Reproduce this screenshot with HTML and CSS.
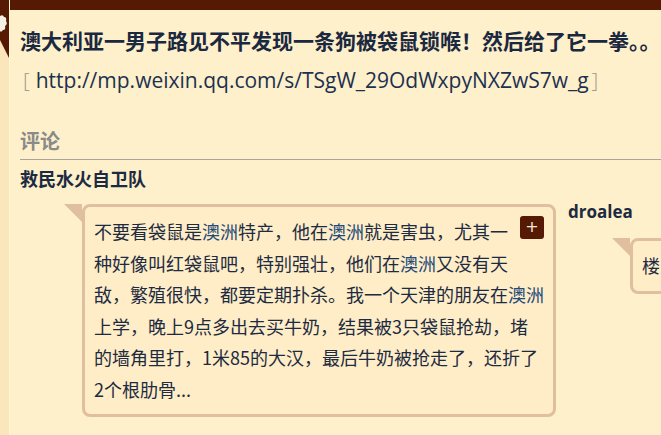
FILE: index.html
```html
<!DOCTYPE html>
<html lang="zh">
<head>
<meta charset="utf-8">
<title>澳大利亚一男子路见不平</title>
<link rel="stylesheet" href="styles.css">
</head>
<body>
<div class="page">
  <aside class="strip">
    <svg class="strip-logo" width="9" height="60" viewBox="0 0 9 60">
      <polygon points="0,0 9,0 9,58 0,40" fill="#561904"/>
      <path d="M0 16 Q3 14 4 17 Q7 17 6 21 Q8 24 5 26 Q6 30 3 30 Q1 33 0 31 Z" fill="#f6efe4"/>
    </svg>
  </aside>
  <main class="main">
    <div class="topbar"></div>
    <div class="content">
      <h1 class="title">澳大利亚一男子路见不平发现一条狗被袋鼠锁喉！然后给了它一拳。。</h1>
      <p class="link"><span class="br br-open">[</span>http://mp.weixin.qq.com/s/TSgW_29OdWxpyNXZwS7w_g<span class="br br-close">]</span></p>
      <h2 class="section">评论</h2>
      <div class="comments">
        <div class="comment">
          <div class="user">救民水火自卫队</div>
          <div class="bubble">
            <div class="card card-wide">
              <span class="plus">+</span>不要看袋鼠是<span class="hl">澳洲</span>特产，他在<span class="hl">澳洲</span>就是害虫，尤其一种好像叫红袋鼠吧，特别强壮，他们在<span class="hl">澳洲</span>又没有天敌，繁殖很快，都要定期扑杀。我一个天津的朋友在<span class="hl">澳洲</span>上学，晚上9点多出去买牛奶，结果被3只袋鼠抢劫，堵的墙角里打，1米85的大汉，最后牛奶被抢走了，还折了2个根肋骨...
            </div>
          </div>
        </div>
        <div class="comment comment-late">
          <div class="user user-latin">droalea</div>
          <div class="bubble">
            <div class="card card-short">楼主威武，这狗真走运</div>
          </div>
        </div>
      </div>
    </div>
  </main>
</div>
</body>
</html>
```
FILE: styles.css
```css
html, body {
  margin: 0;
  padding: 0;
  width: 661px;
  height: 435px;
  overflow: hidden;
  background: #fef0ca;
}

.page {
  display: flex;
  min-height: 435px;
  font-family: "Noto Sans CJK SC", "Noto Sans", sans-serif;
  color: #1c2a42;
}

.strip {
  width: 9px;
  flex: 0 0 9px;
  background: #fbe5bb;
  border-right: 1px solid #fff5da;
}

.strip-logo {
  display: block;
}

.main {
  flex: 1;
  min-width: 0;
}

.topbar {
  height: 10px;
  background: #561904;
}

.content {
  padding-left: 10px;
}

.title {
  margin: 15px 0 0;
  font-size: 21px;
  line-height: 30px;
  font-weight: 700;
  white-space: nowrap;
  color: #1a2840;
}

.link {
  margin: 10px 0 0;
  font-family: "Open Sans", "Noto Sans", sans-serif;
  font-size: 21px;
  line-height: 30px;
  white-space: nowrap;
  color: #1c3050;
}

.br {
  color: #a09a90;
  font-weight: 300;
}

.br-open {
  margin: 0 6px 0 3px;
}

.br-close {
  margin-left: 3px;
}

.section {
  margin: 32px 0 0;
  padding-bottom: 4px;
  font-size: 20px;
  line-height: 28px;
  font-weight: 700;
  color: #8a8a8a;
  border-bottom: 1px solid #aaa49a;
}

.comments {
  display: flex;
  align-items: flex-start;
  gap: 12px;
}

.comment {
  flex: 0 0 auto;
  margin-top: 5px;
}

.comment-late {
  margin-top: 39px;
}

.user {
  font-size: 18px;
  line-height: 26px;
  font-weight: 700;
  color: #1c2a42;
}

.user-latin {
  font-family: "Open Sans", "Noto Sans CJK SC", sans-serif;
  font-size: 17px;
}

.bubble {
  position: relative;
  margin-top: 13px;
  padding-left: 62px;
}

.bubble::before {
  content: "";
  position: absolute;
  left: 44px;
  top: 0;
  border-top: 18px solid #dfbf9e;
  border-left: 18px solid transparent;
}

.card {
  background: #feedc6;
  border: 3px solid #dfbf9e;
  border-radius: 8px;
  padding: 9px;
  font-size: 18px;
  line-height: 31.5px;
  color: #1c2a42;
}

.card-wide {
  width: 450px;
}

.card-short {
  width: 200px;
  white-space: nowrap;
  overflow: hidden;
}

.hl {
  color: #1f4c7a;
}

.plus {
  float: right;
  width: 24px;
  height: 23px;
  margin: 0 0 16px 4px;
  border-radius: 3px;
  background: #561904;
  color: #f4ecd8;
  font-family: "DejaVu Sans", sans-serif;
  font-size: 16px;
  line-height: 22px;
  text-align: center;
}
```
